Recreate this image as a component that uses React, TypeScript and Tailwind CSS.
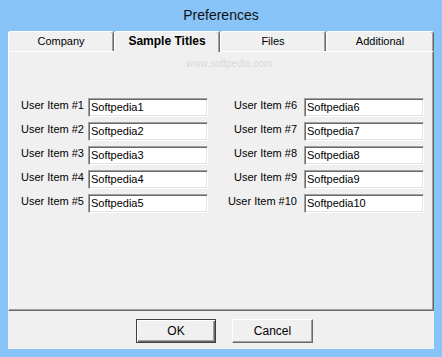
const leftItems = [1, 2, 3, 4, 5];
const rightItems = [6, 7, 8, 9, 10];

const tabs = [
  { label: "Company", width: "w-[106px]" },
  { label: "Sample Titles", width: "w-[106px]", active: true },
  { label: "Files", width: "w-[106px]" },
  { label: "Additional", width: "flex-1" },
];

function Field({ value }: { value: string }) {
  return (
    <div className="h-[19px] w-[120px] bg-white border-t border-l border-t-[#a0a0a0] border-l-[#a0a0a0] border-b border-r border-b-white border-r-white shadow-[inset_1px_1px_0_#696969,inset_-1px_-1px_0_#e3e3e3] pl-[2px] pt-[1px] text-[11px] leading-[15px] text-black whitespace-nowrap">
      {value}
    </div>
  );
}

function Button({ label, primary }: { label: string; primary?: boolean }) {
  return (
    <button
      className={
        primary
          ? "h-[24px] w-[80px] bg-[#f0f0f0] border border-[#404040] shadow-[inset_1px_1px_0_#ffffff,inset_-1px_-1px_0_#696969,inset_-2px_-2px_0_#a0a0a0] text-[12px] text-black"
          : "h-[24px] w-[81px] bg-[#f0f0f0] border-t border-l border-t-white border-l-white border-b border-r border-b-[#696969] border-r-[#696969] shadow-[inset_-1px_-1px_0_#a0a0a0] text-[12px] text-black"
      }
    >
      {label}
    </button>
  );
}

export default function App() {
  return (
    <div className="relative w-[442px] h-[357px] bg-[#88c4f8] flex flex-col font-['Liberation_Sans',Arial,sans-serif] text-black overflow-hidden">
      <div className="h-[31px] flex justify-center items-center pb-[1px] text-[14px] text-[#111]">
        Preferences
      </div>

      <div className="flex-1 mx-[8px] mb-[8px] flex flex-col">
        <div className="flex h-[20px]">
          {tabs.map((tab) => (
            <div
              key={tab.label}
              className={
                tab.active
                  ? `${tab.width} relative z-10 h-[21px] bg-[#f0f0f0] rounded-t-[3px] border-t border-l border-t-white border-l-white border-r border-r-[#696969] shadow-[inset_-1px_0_0_#a0a0a0] flex justify-center text-[12px] font-bold leading-[19px]`
                  : `${tab.width} h-[20px] bg-[#f0f0f0] rounded-t-[3px] border-t border-l border-t-white border-l-white border-r border-r-[#696969] shadow-[inset_-1px_0_0_#a0a0a0] flex justify-center text-[11px] leading-[19px]`
              }
            >
              {tab.label}
            </div>
          ))}
        </div>

        <div className="h-[260px] bg-[#f0f0f0] border-t border-l border-t-white border-l-white border-r border-b border-r-[#696969] border-b-[#696969] shadow-[inset_-1px_-1px_0_#a0a0a0] pt-[46px] pl-[12px] flex gap-[16px]">
          <div className="w-[187px] flex flex-col gap-[5px]">
            {leftItems.map((n) => (
              <div key={n} className="flex items-start justify-between">
                <span className="text-[11px] leading-[15px] whitespace-nowrap">User Item #{n}</span>
                <Field value={`Softpedia${n}`} />
              </div>
            ))}
          </div>
          <div className="w-[200px] flex flex-col gap-[5px]">
            {rightItems.map((n) => (
              <div key={n} className="flex items-start justify-end gap-[7px]">
                <span className="text-[11px] leading-[15px] whitespace-nowrap">User Item #{n}</span>
                <Field value={`Softpedia${n}`} />
              </div>
            ))}
          </div>
        </div>

        <div className="flex-1 bg-[#f0f0f0] flex justify-center items-start gap-[16px] pt-[8px] pl-[7px]">
          <Button label="OK" primary />
          <Button label="Cancel" />
        </div>
      </div>

      {/* faint watermark */}
      <div className="absolute left-[186px] top-[56px] pointer-events-none select-none text-[#c8c8c8]/60 text-[10px]">
        www.softpedia.com
      </div>
    </div>
  );
}
